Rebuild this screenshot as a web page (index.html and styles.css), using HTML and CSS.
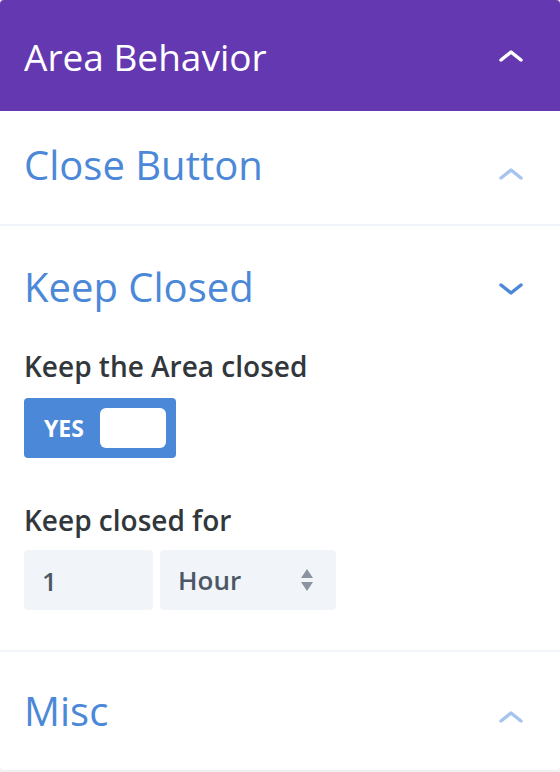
FILE: index.html
```html
<!DOCTYPE html>
<html lang="en">
<head>
    <meta charset="UTF-8">
    <meta name="viewport" content="width=device-width, initial-scale=1.0">
    <title>Area Behavior</title>
    <link rel="stylesheet" href="styles.css">
</head>
<body>
    <div class="panel">
        <div class="panel-header">
            <h1>Area Behavior</h1>
            <svg class="chevron" width="26" height="14" viewBox="0 0 26 14"><path d="M3 11 L13 3 L23 11" fill="none" stroke="#fff" stroke-width="3.5" stroke-linecap="round" stroke-linejoin="round"/></svg>
        </div>

        <div class="toggle closed first">
            <div class="toggle-head">
                <h2>Close Button</h2>
                <svg class="chevron" width="26" height="14" viewBox="0 0 26 14"><path d="M3 11 L13 3 L23 11" fill="none" stroke="currentColor" stroke-width="3.5" stroke-linecap="round" stroke-linejoin="round"/></svg>
            </div>
        </div>

        <div class="toggle open">
            <div class="toggle-head">
                <h2>Keep Closed</h2>
                <svg class="chevron" width="26" height="14" viewBox="0 0 26 14"><path d="M3 3 L13 11 L23 3" fill="none" stroke="currentColor" stroke-width="3.5" stroke-linecap="round" stroke-linejoin="round"/></svg>
            </div>
            <div class="toggle-body">
                <div class="field">
                    <label>Keep the Area closed</label>
                    <div class="switch">
                        <span>YES</span>
                        <span class="knob"></span>
                    </div>
                </div>
                <div class="field">
                    <label>Keep closed for</label>
                    <div class="row">
                        <div class="input">1</div>
                        <div class="select">
                            <span>Hour</span>
                            <svg width="14" height="24" viewBox="0 0 14 24"><path d="M7 1 L13 10 L1 10 Z M7 23 L13 14 L1 14 Z" fill="#8b949e"/></svg>
                        </div>
                    </div>
                </div>
            </div>
        </div>

        <div class="toggle closed last">
            <div class="toggle-head">
                <h2>Misc</h2>
                <svg class="chevron" width="26" height="14" viewBox="0 0 26 14"><path d="M3 11 L13 3 L23 11" fill="none" stroke="currentColor" stroke-width="3.5" stroke-linecap="round" stroke-linejoin="round"/></svg>
            </div>
        </div>
    </div>
</body>
</html>
```

FILE: styles.css
```css
body {
    margin: 0;
    padding: 0;
    background-color: #f0f0f3;
    font-family: 'Open Sans', 'Noto Sans', sans-serif;
}

.panel {
    width: 560px;
    height: 770px;
    background-color: #fff;
    border-radius: 4px;
    overflow: hidden;
}

.panel-header {
    background-color: #6438b0;
    height: 111px;
    display: flex;
    align-items: center;
    justify-content: space-between;
    padding: 0 36px 0 24px;
    box-sizing: border-box;
}

.panel-header h1 {
    margin: 0;
    color: #fff;
    font-size: 37px;
    font-weight: 400;
    line-height: 44px;
    padding-top: 2px;
}

.toggle {
    border-bottom: 2px solid #f1f5f9;
}

.toggle.last {
    border-bottom: none;
}

.toggle-head {
    height: 113px;
    display: flex;
    align-items: center;
    justify-content: space-between;
    padding: 0 36px 0 24px;
    box-sizing: border-box;
}

.toggle-head h2 {
    margin: 0;
    color: #4c88d8;
    font-size: 40px;
    font-weight: 400;
    line-height: 48px;
}

.first .toggle-head h2 {
    margin-bottom: 5px;
}

.closed .chevron {
    color: #a6c4ee;
    margin-top: 12px;
}

.open .toggle-head {
    height: 122px;
}

.open .chevron {
    color: #4c88d8;
    margin-top: 4px;
}

.last .toggle-head {
    height: 118px;
}

.toggle-body {
    padding: 0 24px 40px;
}

.field {
    margin-bottom: 44px;
}

.field:last-child {
    margin-bottom: 0;
}

.field label {
    display: block;
    color: #32373c;
    font-size: 28px;
    font-weight: 600;
    line-height: 36px;
    margin-bottom: 14px;
}

.field:last-child label {
    margin-bottom: 12px;
}

.switch {
    width: 152px;
    height: 60px;
    background-color: #4c88d8;
    border-radius: 4px;
    display: flex;
    align-items: center;
    justify-content: space-between;
    padding: 0 10px 0 20px;
    box-sizing: border-box;
    color: #fff;
    font-size: 23px;
    font-weight: 700;
}

.knob {
    width: 66px;
    height: 40px;
    background-color: #fff;
    border-radius: 6px;
}

.row {
    display: flex;
    gap: 7px;
    align-items: center;
}

.input {
    width: 129px;
    height: 60px;
    background-color: #f1f5f9;
    border-radius: 4px;
    box-sizing: border-box;
    padding: 2px 18px 0;
    display: flex;
    align-items: center;
    color: #4c5866;
    font-size: 26px;
    font-weight: 600;
}

.select {
    width: 176px;
    height: 60px;
    background-color: #f1f5f9;
    border-radius: 4px;
    box-sizing: border-box;
    padding: 0 22px 0 18px;
    display: flex;
    align-items: center;
    justify-content: space-between;
    color: #4c5866;
    font-size: 26px;
    font-weight: 600;
}
```
